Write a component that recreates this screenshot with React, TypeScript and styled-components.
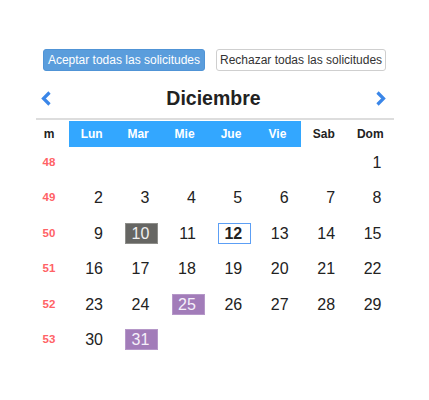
import React from "react";
import styled, { createGlobalStyle, css } from "styled-components";

const GlobalStyle = createGlobalStyle`
  html, body { margin: 0; padding: 0; background: #fff; }
  body { font-family: "Liberation Sans", Arial, sans-serif; color: #222; }
`;

const Page = styled.div`
  width: 429px;
  padding-top: 49px;
  display: flex;
  flex-direction: column;
  align-items: center;
`;

const ButtonRow = styled.div`
  display: flex;
  gap: 11px;
  height: 22px;
`;

const ActionButton = styled.button<{ $primary?: boolean }>`
  height: 22px;
  box-sizing: border-box;
  padding: 0 4px;
  border-radius: 3px;
  font-family: "Liberation Sans", Arial, sans-serif;
  font-size: 12px;
  line-height: 20px;
  cursor: pointer;
  ${(p) =>
    p.$primary
      ? css`
          background: #5a9ddc;
          border: 1px solid #5094d6;
          color: #fff;
        `
      : css`
          background: #fff;
          border: 1px solid #cfcfcf;
          color: #333;
          padding: 0 3px;
        `}
`;

const Calendar = styled.div`
  width: 358px;
  margin-top: 13px;
`;

const MonthHeader = styled.div`
  height: 28px;
  display: flex;
  align-items: center;
  justify-content: space-between;
  padding: 0 6px 0 4px;
`;

const NavButton = styled.span`
  display: flex;
  width: 12px;
  height: 16px;
  align-items: center;
  justify-content: center;
`;

const MonthTitle = styled.div`
  font-size: 19.5px;
  font-weight: bold;
  color: #222;
`;

const Grid = styled.div`
  margin-top: 6px;
  border-top: 2px solid #dddddd;
  padding-top: 1px;
  display: grid;
  grid-template-columns: 33px repeat(7, 1fr);
  grid-template-rows: 26px;
  grid-auto-rows: 35.5px;
`;

const HeadCell = styled.div<{ $weekday?: boolean }>`
  display: flex;
  align-items: center;
  justify-content: center;
  font-size: 12px;
  font-weight: bold;
  background: ${(p) => (p.$weekday ? "#33a7ff" : "transparent")};
  color: ${(p) => (p.$weekday ? "#fff" : "#222")};
`;

const WeekHead = styled(HeadCell)`
  padding-right: 6px;
`;

const WeekCell = styled.div`
  display: flex;
  justify-content: center;
  padding-right: 6px;
  padding-top: 4.5px;
  font-size: 11.5px;
  font-weight: bold;
  color: #ff6266;
  line-height: 21px;
`;

const DayCell = styled.div`
  display: flex;
  justify-content: flex-end;
  align-items: flex-start;
  padding-right: 3px;
  padding-top: 4.5px;
`;

type Variant = "none" | "past" | "today" | "holiday";

const DayBox = styled.div<{ $variant: Variant }>`
  width: 33px;
  height: 21px;
  box-sizing: border-box;
  text-align: right;
  padding-right: 8px;
  font-size: 16px;
  line-height: 19px;
  border: 1px solid transparent;
  color: #222;
  ${(p) =>
    p.$variant === "past" &&
    css`
      background: #666663;
      border-color: #8e8e8a;
      color: #f0f0f0;
    `}
  ${(p) =>
    p.$variant === "today" &&
    css`
      border-color: #5c9ff5;
      font-weight: bold;
    `}
  ${(p) =>
    p.$variant === "holiday" &&
    css`
      background: #a27cb9;
      border-color: #b597c8;
      color: #f5f0fa;
    `}
`;

const Chevron = ({ dir }: { dir: "left" | "right" }) => (
  <svg width="10" height="15" viewBox="0 0 10 15">
    <path
      d={dir === "left" ? "M8.5 1.5 L2.5 7.5 L8.5 13.5" : "M1.5 1.5 L7.5 7.5 L1.5 13.5"}
      fill="none"
      stroke="#3a86e8"
      strokeWidth="3.2"
    />
  </svg>
);

const headers = ["Lun", "Mar", "Mie", "Jue", "Vie", "Sab", "Dom"];

const weeks: { num: number; days: (number | null)[] }[] = [
  { num: 48, days: [null, null, null, null, null, null, 1] },
  { num: 49, days: [2, 3, 4, 5, 6, 7, 8] },
  { num: 50, days: [9, 10, 11, 12, 13, 14, 15] },
  { num: 51, days: [16, 17, 18, 19, 20, 21, 22] },
  { num: 52, days: [23, 24, 25, 26, 27, 28, 29] },
  { num: 53, days: [30, 31, null, null, null, null, null] },
];

const variantOf = (d: number): Variant => {
  if (d === 10) return "past";
  if (d === 12) return "today";
  if (d === 25 || d === 31) return "holiday";
  return "none";
};

export default function App() {
  return (
    <>
      <GlobalStyle />
      <Page>
        <ButtonRow>
          <ActionButton $primary>Aceptar todas las solicitudes</ActionButton>
          <ActionButton>Rechazar todas las solicitudes</ActionButton>
        </ButtonRow>
        <Calendar>
          <MonthHeader>
            <NavButton>
              <Chevron dir="left" />
            </NavButton>
            <MonthTitle>Diciembre</MonthTitle>
            <NavButton>
              <Chevron dir="right" />
            </NavButton>
          </MonthHeader>
          <Grid>
            <WeekHead>m</WeekHead>
            {headers.map((h, i) => (
              <HeadCell key={h} $weekday={i < 5}>
                {h}
              </HeadCell>
            ))}
            {weeks.map((w) => (
              <React.Fragment key={w.num}>
                <WeekCell>{w.num}</WeekCell>
                {w.days.map((d, i) => (
                  <DayCell key={i}>
                    {d !== null && <DayBox $variant={variantOf(d)}>{d}</DayBox>}
                  </DayCell>
                ))}
              </React.Fragment>
            ))}
          </Grid>
        </Calendar>
      </Page>
    </>
  );
}
